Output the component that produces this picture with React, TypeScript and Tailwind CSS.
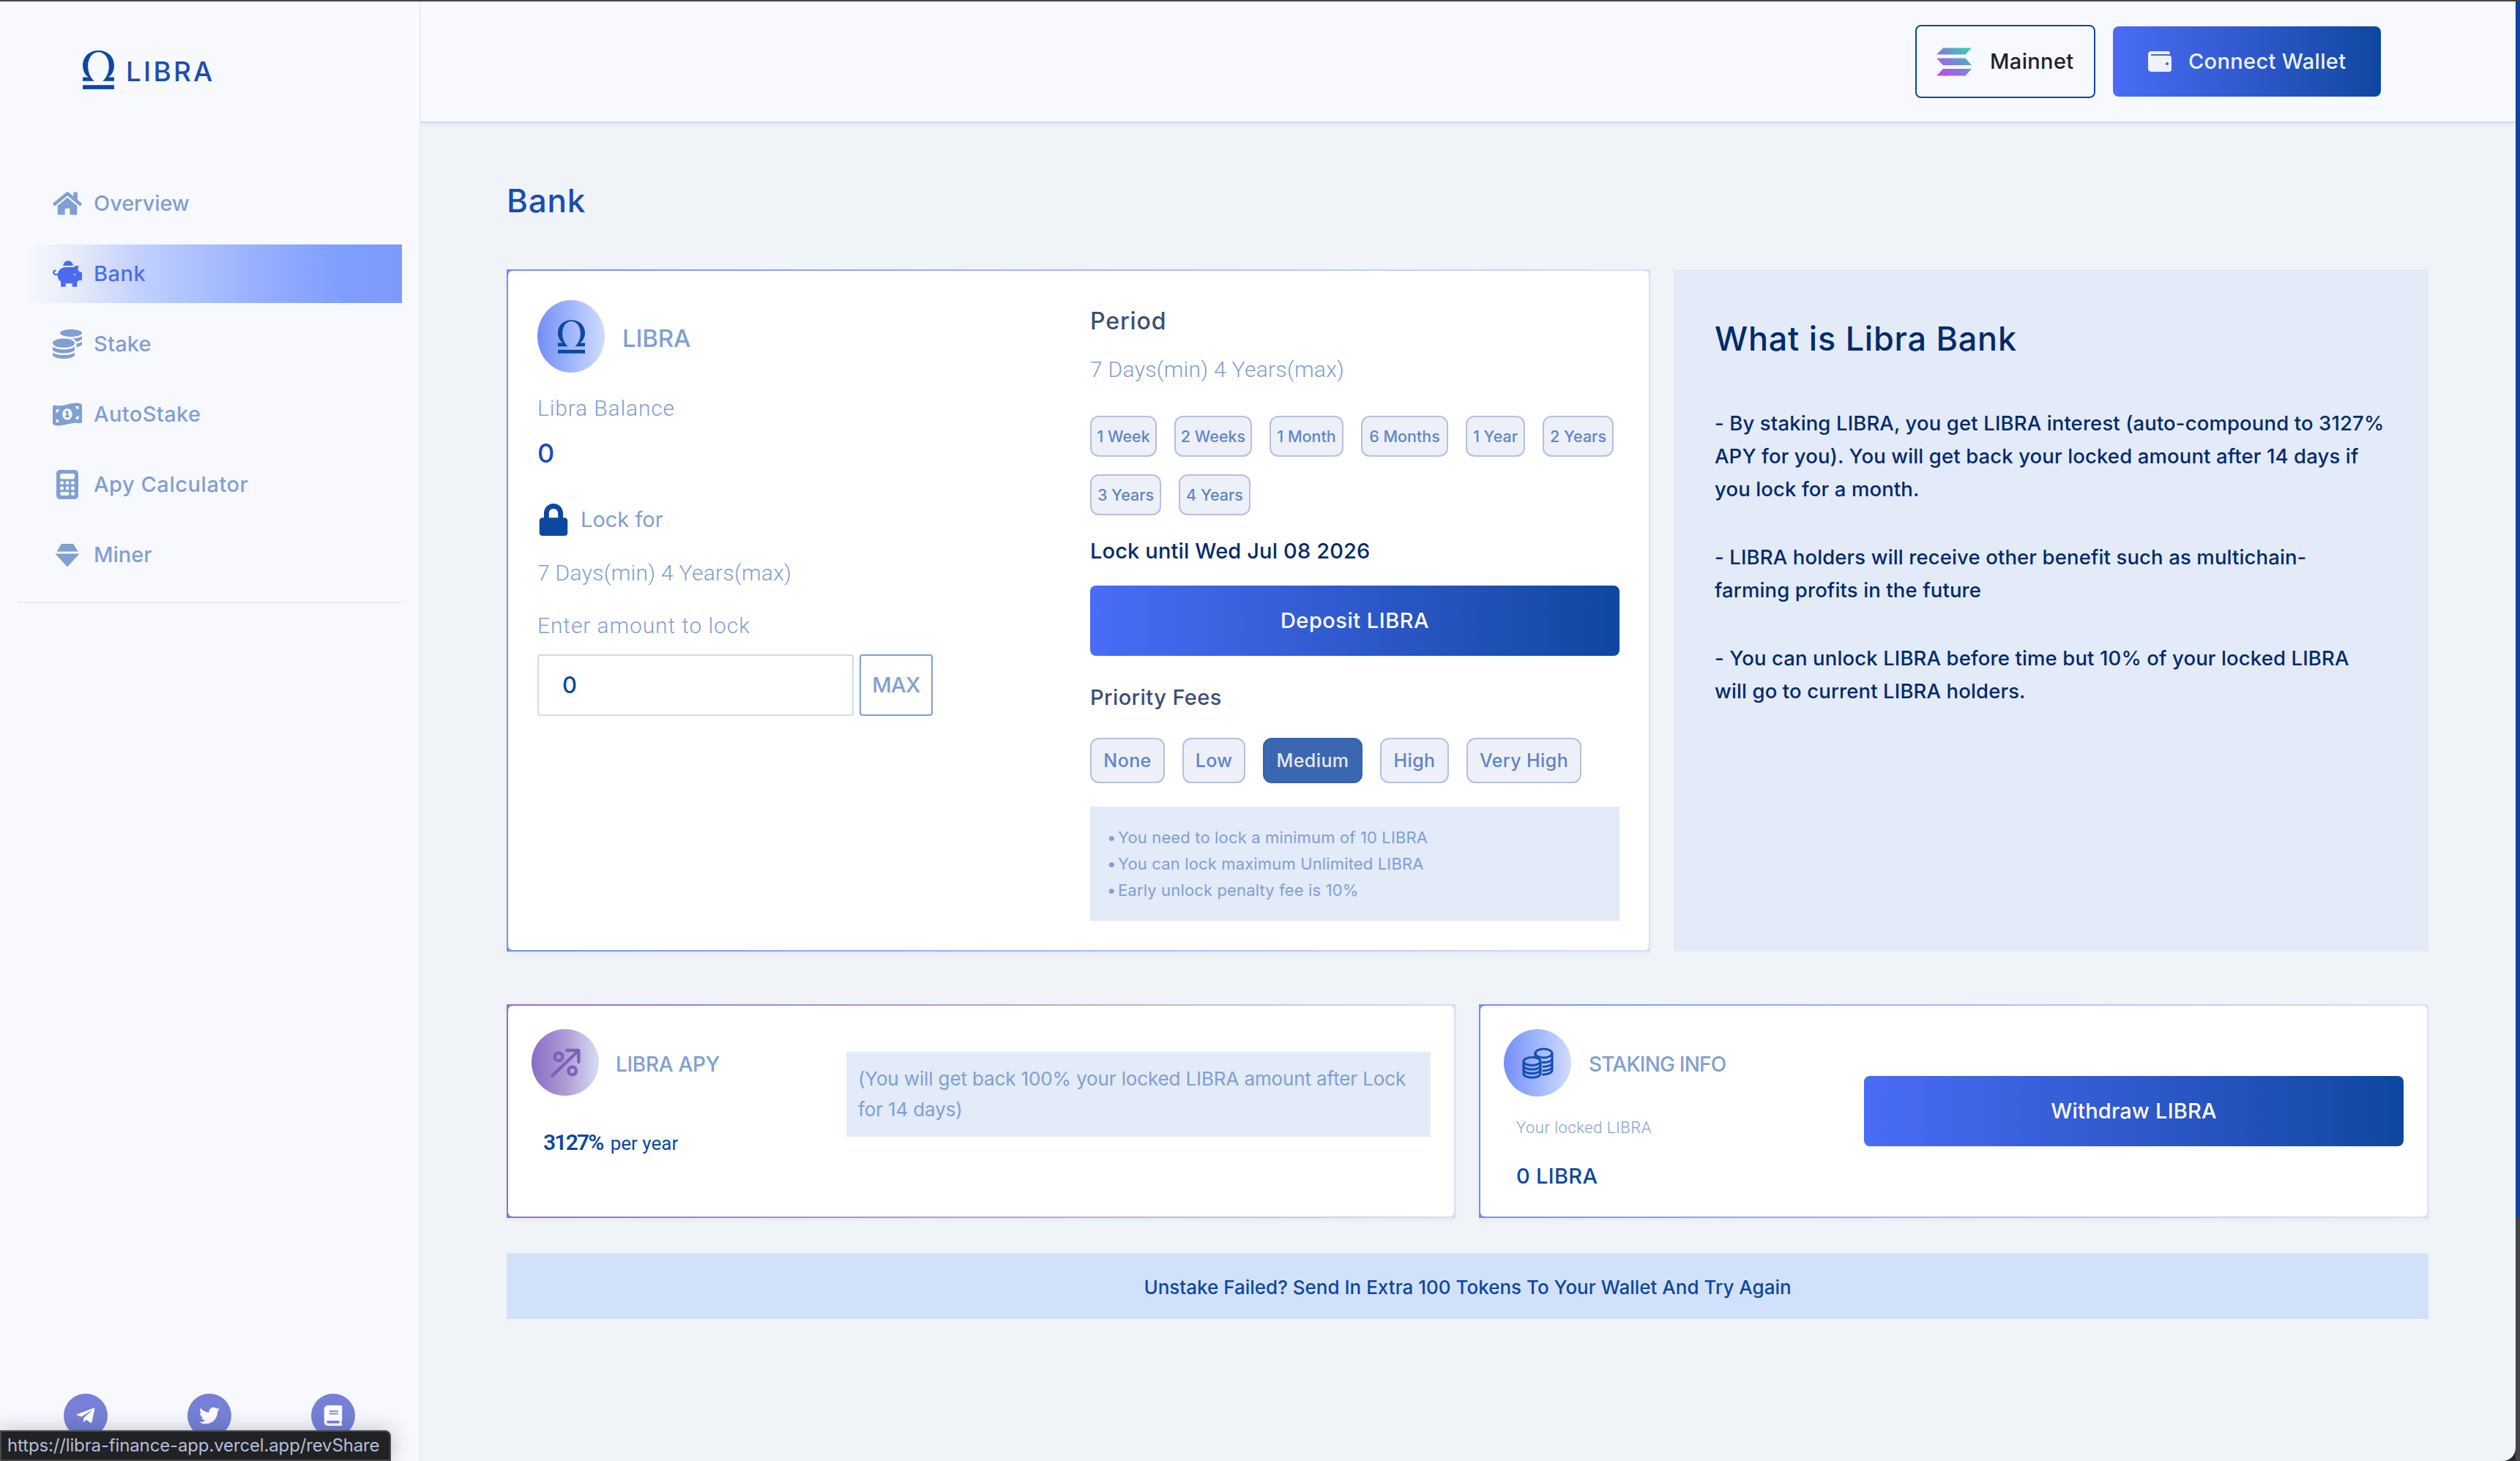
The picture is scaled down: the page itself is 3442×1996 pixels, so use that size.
import type { ReactNode } from "react";
import clsx from "clsx";
import {
  FaBook,
  FaCoins,
  FaHome,
  FaLock,
  FaPiggyBank,
  FaTelegramPlane,
  FaTwitter,
  FaWallet,
} from "react-icons/fa";
import { FaCalculator, FaMoneyBill1Wave } from "react-icons/fa6";

const PERIODS = [
  { label: "1 Week", width: "w-[91px]" },
  { label: "2 Weeks", width: "w-[106px]" },
  { label: "1 Month", width: "w-[101px]" },
  { label: "6 Months", width: "w-[119px]" },
  { label: "1 Year", width: "w-[81px]" },
  { label: "2 Years", width: "w-[97px]" },
  { label: "3 Years", width: "w-[97px]" },
  { label: "4 Years", width: "w-[98px]" },
];

const FEES = [
  { label: "None", width: "w-[102px]" },
  { label: "Low", width: "w-[86px]" },
  { label: "Medium", width: "w-[136px]", active: true },
  { label: "High", width: "w-[94px]" },
  { label: "Very High", width: "w-[157px]" },
];

const NOTES = [
  "You need to lock a minimum of 10 LIBRA",
  "You can lock maximum Unlimited LIBRA",
  "Early unlock penalty fee is 10%",
];

function Omega({ className }: { className?: string }) {
  return (
    <svg viewBox="0 0 42.3 52.3" fill="#0d47a1" className={className}>
      <path d="M0 36V41.2H15.5C10 36.5 7 29 7 21C7 10 13 2.2 21.1 2.2C29.3 2.2 35.3 10 35.3 21C35.3 29 32.3 36.5 26.8 41.2H42.3V36H34.8C39.5 32.5 42.3 27 42.3 20C42.3 8 33 0 21.1 0C9.3 0 0 8 0 20C0 27 2.8 32.5 7.5 36Z" />
      <rect y="46.6" width="42.3" height="5.6" />
    </svg>
  );
}

function Gem() {
  return (
    <svg viewBox="0 0 40 40" fill="currentColor" className="size-10">
      <path d="M12 5H28L34.5 15.5H5.5Z" />
      <path d="M3.5 18.5H36.5L20.5 36H19.5Z" />
    </svg>
  );
}

function Solana() {
  return (
    <svg viewBox="0 0 48 39" className="h-[39px] w-12">
      <defs>
        <linearGradient id="sol" x1="44" y1="0" x2="10" y2="40" gradientUnits="userSpaceOnUse">
          <stop offset="0" stopColor="#2fd6b0" />
          <stop offset="0.5" stopColor="#7589d6" />
          <stop offset="1" stopColor="#c04bf0" />
        </linearGradient>
      </defs>
      <path
        fill="url(#sol)"
        d="M9 0.5H48L39.5 9.5H0ZM0 14.5H39.5L48 24H9ZM9 29H48L39.5 38.5H0Z"
      />
    </svg>
  );
}

function GrowthIcon() {
  return (
    <svg
      viewBox="0 0 126 120"
      fill="none"
      stroke="#7d62bb"
      strokeWidth="13"
      strokeLinecap="round"
      strokeLinejoin="round"
      className="h-10 w-[42px]"
    >
      <path d="M10 113L112 15M70 9H118V57" />
      <circle cx="36" cy="35" r="16" />
      <circle cx="92" cy="93" r="16" />
    </svg>
  );
}

function CoinStacks() {
  return (
    <svg
      viewBox="0 0 43 43"
      fill="none"
      stroke="#174fb0"
      strokeWidth="3"
      strokeLinecap="round"
      className="size-[43px]"
    >
      <ellipse cx="29.5" cy="8" rx="11.5" ry="6" />
      <path d="M18 8V13M41 8V31C41 34.5 35 37.2 28.5 37" />
      <path d="M28 20.5C34 20.8 41 19 41 15.5M29 26.2C35 26.2 41 24.5 41 21M29 31.8C35 31.8 41 30 41 26.5" />
      <ellipse cx="13.5" cy="19" rx="11.5" ry="5.5" />
      <path d="M2 19V35.5C2 39 7 41.2 13.5 41.2S25 39 25 35.5V19" />
      <path d="M2 24.5C2 28 7 30 13.5 30S25 28 25 24.5M2 30C2 33.5 7 35.6 13.5 35.6S25 33.5 25 30" />
    </svg>
  );
}

const NAV = [
  { label: "Overview", icon: <FaHome size={40} />, tracking: "tracking-[-0.1px]" },
  { label: "Bank", icon: <FaPiggyBank size={40} />, tracking: "tracking-[0.5px]", active: true },
  { label: "Stake", icon: <FaCoins size={40} />, tracking: "tracking-[0.2px]" },
  { label: "AutoStake", icon: <FaMoneyBill1Wave size={40} />, tracking: "tracking-[0.4px]" },
  { label: "Apy Calculator", icon: <FaCalculator size={40} />, tracking: "tracking-[0.55px]" },
  { label: "Miner", icon: <Gem />, tracking: "tracking-normal" },
];

function Sidebar() {
  return (
    <aside className="flex w-[575px] shrink-0 flex-col border-r-2 border-[#e9ecf1] bg-[#f8f9ff] pt-[67px]">
      <div className="flex h-[53px] items-center gap-4 pl-[113px]">
        <Omega className="h-[53px] w-[43px]" />
        <span className="pt-1 text-[37px] leading-none font-medium tracking-[3.2px] text-[#1a4db3]">
          LIBRA
        </span>
      </div>

      <nav className="mt-[116px] ml-6 flex w-[525px] flex-col gap-4">
        {NAV.map(({ label, icon, tracking, active }) => (
          <a
            key={label}
            className={clsx(
              "flex h-20 items-center gap-4 pl-12 text-[29px] font-medium",
              tracking,
              active
                ? "bg-[linear-gradient(90deg,transparent_2%,#e4eaf8_16%,#c3d1fe_31%,#94adfe_65%,#7e9eff_85%,#7c9afc)] text-[#4a6cf0]"
                : "text-[#809fd2]"
            )}
          >
            {icon}
            <span>{label}</span>
          </a>
        ))}
      </nav>
      <hr className="mt-6 ml-6 w-[525px] border-t-2 border-[#e8ebf0]" />

      <div className="mt-auto flex gap-[109px] pb-8 pl-[87px] text-white">
        {[FaTelegramPlane, FaTwitter, FaBook].map((Icon, i) => (
          <a
            key={i}
            className="flex size-[60px] items-center justify-center rounded-full bg-[#7680d8]"
          >
            <Icon size={28} />
          </a>
        ))}
      </div>
    </aside>
  );
}

function Header() {
  return (
    <header className="flex h-[166px] shrink-0 items-center justify-end gap-6 border-b-2 border-[#d0daee] bg-[#f8f9ff] pr-[184px] text-[29px] font-medium tracking-[0.35px] shadow-[0_2px_6px_rgba(120,140,180,0.12)]">
      <button className="flex h-[100px] w-[246px] items-center gap-[25px] rounded-lg border-2 border-[#0d47a1] pl-[27px] text-[#1d1f2b]">
        <Solana />
        Mainnet
      </button>
      <button className="flex h-24 w-[366px] items-center gap-[23px] rounded-lg bg-linear-to-r from-[#4a6cf7] to-[#0d47a1] pl-12 text-[#eef2f9]">
        <FaWallet size={32} />
        Connect Wallet
      </button>
    </header>
  );
}

type CardProps = { tone?: "blue" | "purple"; className?: string; children: ReactNode };

// 2px gradient frame with a slightly rounded white body
function Card({ tone = "blue", className, children }: CardProps) {
  return (
    <section
      className={clsx(
        "flex shrink-0 p-0.5 shadow-[0_3px_6px_rgba(140,155,190,0.1)]",
        tone === "blue"
          ? "bg-linear-to-r from-[#758ef8] via-[#a5b9fd] to-[#d5e2f8]"
          : "bg-linear-to-r from-[#9070c8] via-[#b49fd2] to-[#d3def3]",
        className
      )}
    >
      <div className="flex flex-1 rounded-md bg-white">{children}</div>
    </section>
  );
}

function Chip({ className, active, children }: { className: string; active?: boolean; children: ReactNode }) {
  return (
    <button
      className={clsx(
        "flex items-center justify-center rounded-xl border-2 font-medium whitespace-nowrap",
        active
          ? "border-[#3562ac] bg-[#3b66b1] text-[#e4e9f4]"
          : "border-[#b4c0de] bg-[#edf0f9] text-[#6085c6]",
        className
      )}
    >
      {children}
    </button>
  );
}

function DepositCard() {
  return (
    <Card className="h-[932px] w-[1562px]">
      <div className="ml-10 flex w-[755px] shrink-0 flex-col pt-10 text-[29px] leading-10 text-[#809fd2]">
        <div className="flex h-[99px] items-center gap-6">
          <div className="flex h-[99px] w-[92px] items-center justify-center rounded-[50%] bg-linear-to-r from-[#758ef8] via-[#a0b6fd] to-[#d0dcfb]">
            <Omega className="h-[46px] w-[37px]" />
          </div>
          <span className="pt-1 text-[33px] font-medium tracking-[-0.2px]">LIBRA</span>
        </div>
        <p className="mt-[29px] font-[Roboto,sans-serif] text-[30px] font-light tracking-[0.85px]">
          Libra Balance
        </p>
        <p className="mt-[17px] text-4xl leading-[48px] font-medium text-[#1a4db3]">0</p>
        <div className="mt-[45px] flex h-11 items-center gap-[15px]">
          <FaLock size={44} color="#0d47a1" />
          <span>Lock for</span>
        </div>
        <p className="mt-[31px] font-[Roboto,sans-serif] text-[30px] font-light tracking-[0.3px]">
          7 Days(min) 4 Years(max)
        </p>
        <p className="mt-8 font-[Roboto,sans-serif] text-[30px] font-light tracking-[0.9px]">
          Enter amount to lock
        </p>
        <div className="mt-[19px] flex h-[84px] gap-2 font-medium">
          <div className="flex w-[432px] items-center rounded border-2 border-[#d0daee] pl-8 text-[31px] text-[#0d47a1]">
            0
          </div>
          <button className="w-[100px] rounded border-2 border-[#809fd2] tracking-[-0.6px]">
            MAX
          </button>
        </div>
      </div>

      <div className="flex w-[723px] shrink-0 flex-col pt-[49px] text-[29px] leading-10">
        <h3 className="text-[32px] font-medium tracking-[0.9px] text-[#3a4f73]">Period</h3>
        <p className="mt-[26px] font-[Roboto,sans-serif] text-[30px] font-light tracking-[0.3px] text-[#809fd2]">
          7 Days(min) 4 Years(max)
        </p>
        <div className="mt-[43px] flex flex-wrap gap-6 text-[21.5px]">
          {PERIODS.map(({ label, width }) => (
            <Chip key={label} className={clsx("h-14", width)}>
              {label}
            </Chip>
          ))}
        </div>
        <p className="mt-[29px] font-medium tracking-[0.15px] text-[#002a6b]">
          Lock until Wed Jul 08 2026
        </p>
        <button className="mt-[27px] h-24 rounded-lg bg-linear-to-r from-[#4a6cf7] to-[#0d47a1] font-medium tracking-[0.5px] text-white">
          Deposit LIBRA
        </button>
        <h3 className="mt-[37px] font-medium tracking-[0.4px] text-[#3a4f73]">Priority Fees</h3>
        <div className="mt-[35px] flex gap-6 text-[25px]">
          {FEES.map(({ label, width, active }) => (
            <Chip key={label} active={active} className={clsx("h-[62px] tracking-[0.4px]", width)}>
              {label}
            </Chip>
          ))}
        </div>
        <ul className="mt-8 bg-[#e3eaf8] py-6 pl-[23px] text-[22px] leading-9 tracking-[0.15px] text-[#809fd2]">
          {NOTES.map((note) => (
            <li key={note} className="flex">
              <span className="w-[15px]">•</span>
              {note}
            </li>
          ))}
        </ul>
      </div>
    </Card>
  );
}

function InfoCard() {
  return (
    <section className="h-[932px] w-[1031px] bg-[#e3eaf8] pt-[67px] pl-14 text-[#002a6b]">
      <h2 className="text-[45px] leading-[56px] font-medium tracking-[0.75px]">
        What is Libra Bank
      </h2>
      <div className="mt-[65px] space-y-12 text-[27.5px] leading-[45px] font-medium tracking-[0.12px] whitespace-nowrap">
        <p>
          - By staking LIBRA, you get LIBRA interest (auto-compound to 3127%
          <br />
          APY for you). You will get back your locked amount after 14 days if
          <br />
          you lock for a month.
        </p>
        <p>
          - LIBRA holders will receive other benefit such as multichain-
          <br />
          farming profits in the future
        </p>
        <p>
          - You can unlock LIBRA before time but 10% of your locked LIBRA
          <br />
          will go to current LIBRA holders.
        </p>
      </div>
    </section>
  );
}

function ApyCard() {
  return (
    <Card tone="purple" className="h-[292px] w-[1296px]">
      <div className="w-[462px] shrink-0 pt-8 pl-8">
        <div className="flex items-center gap-[23px]">
          <div className="flex h-[91px] w-[92px] items-center justify-center rounded-full bg-linear-to-r from-[#8a6cc6] via-[#b09ad4] to-[#d3def0]">
            <GrowthIcon />
          </div>
          <span className="pt-1 text-[28px] font-medium tracking-[-0.3px] text-[#809fd2]">
            LIBRA APY
          </span>
        </div>
        <p className="mt-11 pl-4 font-[Roboto,sans-serif] leading-10 text-[#0d47a1]">
          <span className="text-[30px] font-semibold tracking-[-1.8px]">3127%</span>
          <span className="pl-2.5 text-[26px]">per year</span>
        </p>
      </div>
      <p className="mt-[63px] h-[116px] w-[798px] bg-[#e3eaf8] py-4 pl-4 text-[26px] leading-[42px] tracking-[-0.13px] text-[#809fd2]">
        (You will get back 100% your locked LIBRA amount after Lock
        <br />
        for 14 days)
      </p>
    </Card>
  );
}

function StakingCard() {
  return (
    <Card className="h-[292px] w-[1297px]">
      <div className="w-[524px] shrink-0 pt-8 pl-8">
        <div className="flex items-center gap-6">
          <div className="flex size-[92px] items-center justify-center rounded-full bg-linear-to-r from-[#758ef8] via-[#a0b6fd] to-[#d0dcfb]">
            <CoinStacks />
          </div>
          <span className="pt-1 text-[28px] font-medium tracking-[-0.8px] text-[#809fd2]">
            STAKING INFO
          </span>
        </div>
        <p className="mt-[27px] pl-[17px] font-[Roboto,sans-serif] text-[22px] leading-8 font-light tracking-[0.5px] text-[#809fd2]">
          Your locked LIBRA
        </p>
        <p className="mt-[30px] pl-[17px] text-[29px] leading-10 font-medium tracking-[0.3px] text-[#0d47a1]">
          0 LIBRA
        </p>
      </div>
      <button className="mt-24 h-24 w-[737px] rounded-lg bg-linear-to-r from-[#4a6cf7] to-[#0d47a1] text-[29px] font-medium tracking-[0.2px] text-white">
        Withdraw LIBRA
      </button>
    </Card>
  );
}

export default function App() {
  return (
    <div className="relative flex h-[1996px] w-[3442px] overflow-hidden border-t-2 border-[#444] bg-[#25272c] font-[Inter,sans-serif]">
      <Sidebar />

      <div className="flex flex-1 flex-col overflow-hidden rounded-br-[18px] bg-[#f0f4f9]">
        <Header />
        <main className="flex flex-col pt-[78px] pl-[117px]">
          <h1 className="text-[44px] leading-[56px] font-medium tracking-[0.8px] text-[#1a4db3]">
            Bank
          </h1>
          <div className="mt-[66px] flex gap-8">
            <DepositCard />
            <InfoCard />
          </div>
          <div className="mt-[72px] flex gap-8">
            <ApyCard />
            <StakingCard />
          </div>
          <p className="mt-12 flex h-[90px] w-[2625px] items-center justify-center bg-[#d2e1fa] pt-0.5 text-[26px] font-medium text-[#0d47a1]">
            Unstake Failed? Send In Extra 100 Tokens To Your Wallet And Try Again
          </p>
        </main>
      </div>

      <div className="flex w-1.5 shrink-0 flex-col">
        <div className="h-[1662px] bg-[#0b46a3]" />
        <div className="flex-1 bg-[#444]" />
      </div>

      {/* browser status bubble */}
      <div className="absolute bottom-0 left-0 flex h-[42px] w-[534px] items-center rounded-tr-lg border-2 border-[#48494b] bg-[#212224] pl-2 text-2xl tracking-[-0.14px] text-[#b4bddd] shadow-[0_0_28px_rgba(40,50,70,0.3)]">
        https://libra-finance-app.vercel.app/revShare
      </div>
    </div>
  );
}
